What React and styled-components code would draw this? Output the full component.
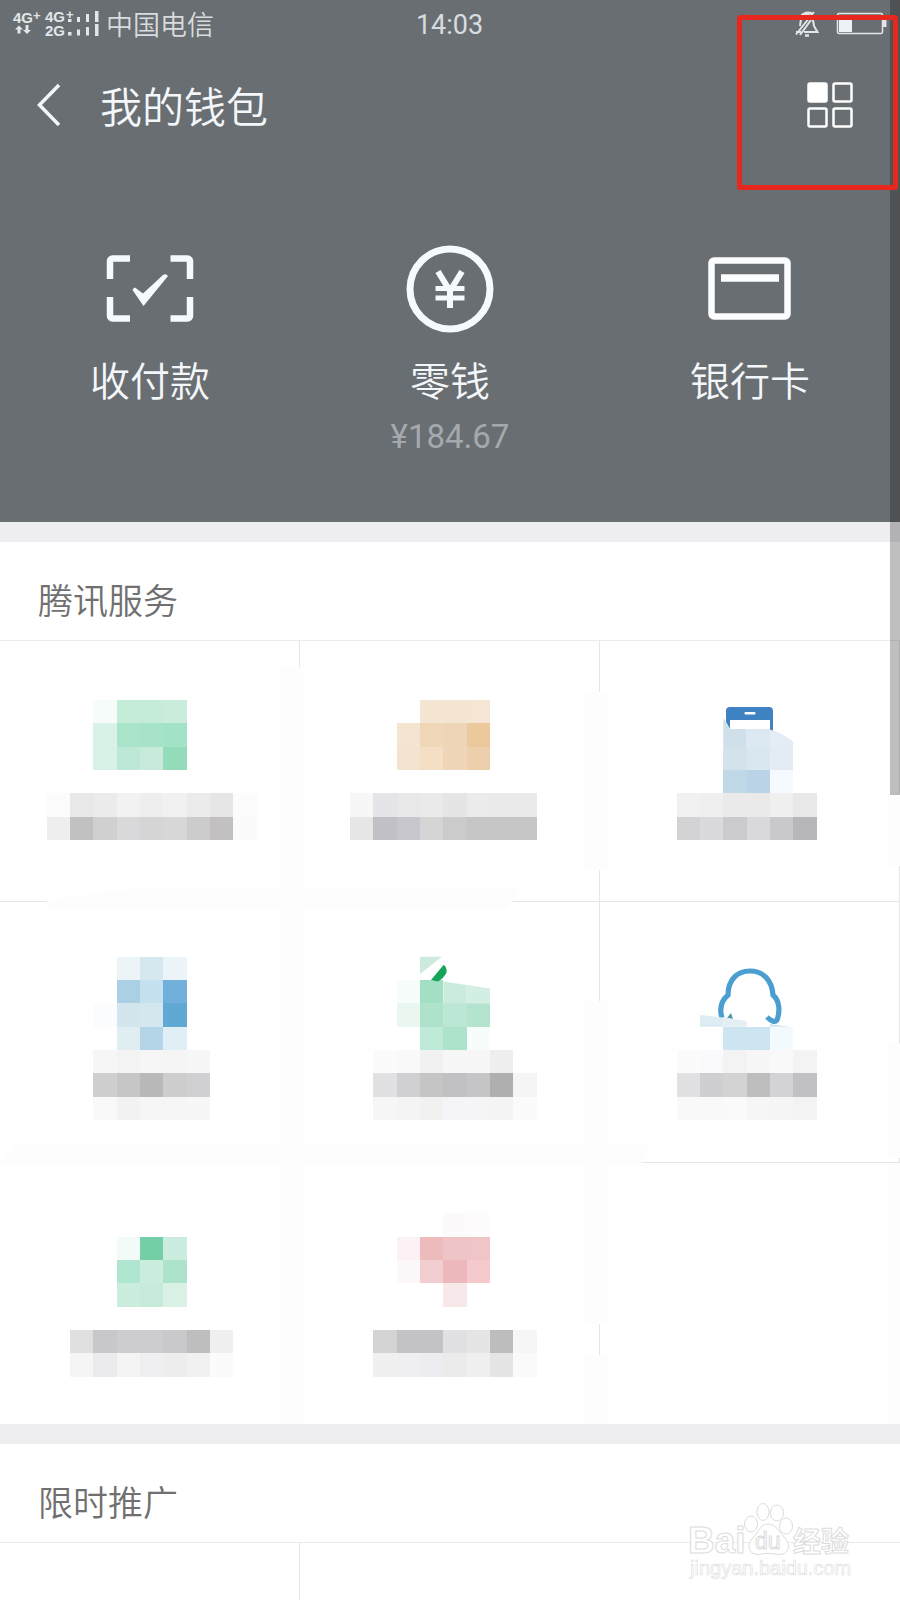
import styled, { createGlobalStyle } from "styled-components"

const CELL = 70 / 3

// each row: [grid row, first grid column, colours]
const services = [
    {
        name: "service-1",
        rows: [
            [30, 4, "#f5fcfa #c5ebd9 #c5ebd9 #caecdd"],
            [31, 4, "#d8f2e7 #a9e4cb #a7e3c9 #a2e2c6"],
            [32, 4, "#d8f2e7 #bde8d5 #c7eadb #93dbb9"],
            [34, 2, "#fcfcfc #e8e8e8 #ebebeb #f2f2f2 #eeeeee #f1f1f1 #ebebeb #e6e6e6 #fcfcfc"],
            [35, 2, "#eeeeee #c1c1c1 #d0d0d0 #d9d9db #d5d5d5 #d7d7d7 #cccccc #c2c0c1 #fbfbfb"],
        ],
    },
    {
        name: "service-2",
        rows: [
            [30, 18, "#f4e5d2 #f4e5d3 #f4e6d3"],
            [31, 17, "#f4e5d1 #efd7b8 #efd5b7 #ebc99c"],
            [32, 17, "#f3e3cf #f4dfc5 #efd6b9 #edcfab"],
            [34, 15, "#f7f7f7 #e5e5e9 #e8e8e9 #eaeaea #e5e5e5 #ebebeb #eaeaea #eaeaea"],
            [35, 15, "#e6e6e6 #c1c0c7 #c7c6cd #d5d5d5 #cbcbcb #c6c6c6 #c6c6c6 #c6c6c6"],
        ],
    },
    {
        name: "service-3",
        rows: [
            [32, 31, "#d2e3ec #d8e7f0 #e3ebf4"],
            [33, 31, "#c1d8e9 #bad3e7 #f6fafe"],
            [34, 29, "#f1f1f1 #efefef #eaeaea #eaeaea #efefef #e8e8e8"],
            [35, 29, "#d3d3d5 #dadadc #cbcbcd #d9d9db #c9c9cb #b7b7b9"],
        ],
        art: (
            <>
                <path d="M726 722V711a4 4 0 0 1 4-4h39a4 4 0 0 1 4 4v20h-3v-11h-40v9z" fill="#3f82c2" />
                <rect x="744.5" y="712" width="11" height="2.6" rx="1" fill="#fff" />
                <path d="M723.3 717.5L730 729H746.7V747H723.3z" fill="#cfe0ea" />
                <path d="M746.7 729H770V747H746.7z" fill="#dce9f2" />
                <path d="M770 729.5Q783 733 793.3 742V747H770z" fill="#e4ecf5" />
            </>
        ),
    },
    {
        name: "service-4",
        rows: [
            [41, 5, "#ecf4f8 #d5e8f0 #ebf4f8"],
            [42, 5, "#abd0e6 #c5e0ee #71b0da"],
            [43, 4, "#fafcfe #d3e6ee #d4e7ee #60a9d5"],
            [44, 5, "#e0eef4 #b4d5e7 #e0eff5"],
            [45, 4, "#f6f6f6 #f3f3f3 #f6f6f6 #f5f5f5 #f7f7f7"],
            [46, 4, "#cfcfcf #c6c6c6 #b9b9b9 #cdcdcd #d0d0d2"],
            [47, 4, "#f9f9f9 #f2f2f2 #f6f6f6 #f6f6f6 #f7f7f7"],
        ],
    },
    {
        name: "service-5",
        rows: [
            [42, 17, "#f7fdfb #a3dfc5"],
            [43, 17, "#eaf7f1 #afe2ca #bbe7d4 #b3e4cd"],
            [44, 18, "#c0ead8 #ade3ca #f6fdfb"],
            [45, 16, "#fbfbfb #f9f9f9 #f1f1f1 #f7f7f7 #f7f7f7 #eeeeee"],
            [46, 16, "#e1e1e3 #d0d0d2 #c5c5c5 #c1c1c3 #c5c5c7 #afafaf #f5f5f5"],
            [47, 16, "#f6f6f6 #f4f4f4 #f1f1f2 #f5f5f9 #f5f5f7 #f4f4f4 #fbfbfb"],
        ],
        art: (
            <>
                <path d="M420 956.7H442L420 974z" fill="#ccebdd" />
                <path d="M443.3 981.5L466.7 985V1003.5H443.3z" fill="#cbecdd" />
                <path d="M466.7 985L490 988.5V1003.5H466.7z" fill="#d3efe3" />
                <path d="M431 980L443.5 965Q447 966.5 446.5 972.5Q444 978 438 981.5z" fill="#16a35b" />
            </>
        ),
    },
    {
        name: "service-6",
        rows: [
            [44, 31, "#cde5f1 #cde5f1 #f3fafd"],
            [45, 29, "#fbfbfb #fafafc #f3f3f3 #f7f7f7 #f9f9f9 #f3f3f3"],
            [46, 29, "#e1e1e3 #cfcfd1 #d3d3d3 #bebebe #d3d3d5 #c1c1c3"],
            [47, 29, "#f9f9f9 #f9f9f9 #fafafa #f6f6f6 #f5f5f5 #f3f3f3"],
        ],
        art: (
            <>
                <path d="M722 1018C719 1008 721 1001 728 995C728 980 737 971 750 971S772 980 773 995C780 1001 780 1012 777 1020Q774 1024 767 1017"
                    fill="none" stroke="#4a9fd0" strokeWidth="5.2" />
                <path d="M727 1018L731 1013L733 1019z" fill="#4f97a0" />
                <path d="M700 1015L723.3 1017.5V1026.7H700z" fill="#ddebf3" />
                <path d="M723.3 1017.5L746.7 1021V1026.7H723.3z" fill="#e3eff5" />
                <path d="M770 1024L790 1026.7H770z" fill="#cde5f1" />
            </>
        ),
    },
    {
        name: "service-7",
        rows: [
            [53, 5, "#f3fbf8 #74cfa7 #cbeddf"],
            [54, 5, "#b0e5cf #cbeddd #ade3cb"],
            [55, 5, "#cbeddd #c7ebda #daf1e5"],
            [57, 3, "#e0e0e1 #c8c8ca #cdcdcf #cdcdcf #c9c9cb #bebebf #f0f0f0"],
            [58, 3, "#f5f5f5 #ebebed #f4f4f5 #efeff1 #ededee #f1f1f1 #fbfbfb"],
        ],
    },
    {
        name: "service-8",
        rows: [
            [52, 19, "#fdfafb #fdfbfc"],
            [53, 17, "#fcf1f4 #eebbbc #efc4c6 #f0c5c8"],
            [54, 17, "#fcf8fa #f2ced1 #edb8bb #f4cacd"],
            [55, 19, "#f7e8ea"],
            [57, 16, "#d4d4d5 #c3c3c5 #c3c3c5 #e1e1e3 #e5e5e6 #bdbdbd #f6f6f6"],
            [58, 16, "#f0f0f0 #efeff1 #ededf1 #ebebec #efefef #e5e5e5 #fafafa"],
        ],
    },
    { name: "empty", rows: [] },
]

// pale bands that run across the tiles
const Bands = () => (
    <g fill="#fdfdfd">
        <path d="M280 667H303V1424H280z" />
        <path d="M583 692H607V870H583zM583 1001H607V1324H583zM583 1355H607V1424H583z" />
        <path d="M47 901Q120 887 180 887H520L508 910H47z" />
        <path d="M20 1143H650L640 1166H0V1162z" />
        <path d="M887 793H900V866H887zM887 1043H900V1158H887zM887 1163H900V1424H887z" />
    </g>
)

const Mosaic = ({ index, rows, art }) => {
    const x = (index % 3) * 300
    const y = 641 + Math.floor(index / 3) * 261
    return (
        <Drawing viewBox={`${x} ${y} 300 261`} aria-hidden="true">
            <Bands />
            {rows.map(([row, col, colors]) => (
                <g key={row} shapeRendering="crispEdges">
                    {colors.split(" ").map((color, i) => (
                        <rect key={i} x={(col + i) * CELL} y={row * CELL} width={CELL} height={CELL} fill={color} />
                    ))}
                </g>
            ))}
            {art}
        </Drawing>
    )
}

const Signal = () => (
    <svg width="88" height="40" viewBox="12 3 88 40" fill="#e3e6e9" fontFamily="Liberation Sans, sans-serif" fontWeight="bold" fontSize="15">
        <text x="13" y="22">4G</text>
        <text x="33" y="19" fontSize="13">+</text>
        <text x="45" y="21">4G</text>
        <text x="66" y="18" fontSize="13">+</text>
        <text x="45" y="35">2G</text>
        <path d="M19 24.5l4 4h-2.5v4h-3v-4H15zM27 33l-4-4h2.5v-5h3v5H31z" />
        <path d="M68 18h3.5v3H68zM77 16h3v5h-3zM86 13h3v8h-3zM95 10h3.5v11H95z" />
        <path d="M68 31h3.5v3.5H68zM77 28.5h3v6h-3zM86 26h3v8.5h-3zM95 23h3.5v12H95z" />
    </svg>
)

const Bell = () => (
    <svg width="26" height="28" viewBox="794 8 26 28" fill="none" stroke="#e3e6e9" strokeWidth="2">
        <path d="M800 24C801 17 801 13 807 12.5C813 13 813 18 814 24L817.5 30H804" />
        <path d="M801 14Q806 8.5 813 12M814 10L796 32.5M811 18L800 33M796 30H801" />
        <path d="M805 33.5H809" strokeWidth="2.5" />
    </svg>
)

const Battery = () => (
    <svg width="51" height="24" viewBox="836 11 51 24">
        <rect x="837.5" y="12.5" width="45" height="20" rx="1.5" fill="none" stroke="#e3e6e9" strokeWidth="1.5" />
        <rect x="839" y="14" width="13" height="17" fill="#eef1f5" />
        <rect x="883" y="19" width="3.5" height="7" fill="#e3e6e9" />
    </svg>
)

const Watermark = () => (
    <Mark width="164" height="88" viewBox="688 1498 164 88" aria-hidden="true">
        <g fill="#fff" stroke="#dcdcdc" strokeWidth="1" fontFamily="Liberation Sans, Noto Sans CJK SC, sans-serif">
            <text x="688" y="1553" fontSize="37" fontWeight="bold">Bai</text>
            <ellipse cx="751" cy="1524" rx="6.5" ry="8" />
            <ellipse cx="763" cy="1512" rx="6" ry="8.5" />
            <ellipse cx="777" cy="1513" rx="6.5" ry="8" />
            <ellipse cx="786" cy="1526" rx="6.5" ry="8" />
            <path d="M768 1524C776 1524 779 1532 785 1538C792 1546 788 1555 778 1554.5C771 1553 765 1553 759 1554.5C749 1555 746 1546 752 1539C758 1533 760 1524 768 1524z" />
            <text x="755" y="1549" fontSize="23">du</text>
            <text x="793" y="1552" fontSize="28" fontWeight="bold">经验</text>
            <text x="690" y="1575" fontSize="20" strokeWidth="0.6">jingyan.baidu.com</text>
        </g>
    </Mark>
)

export default function App() {
    return (
        <Page>
            <GlobalStyle />
            <Header>
                <StatusBar>
                    <Carrier><Signal />中国电信</Carrier>
                    <Time>14:03</Time>
                    <Indicators><Bell /><Battery /></Indicators>
                </StatusBar>
                <Nav>
                    <IconButton aria-label="返回">
                        <svg width="24" height="44" viewBox="0 0 24 44" fill="none" stroke="#f4f7fa" strokeWidth="3.5">
                            <path d="M22 2L2.5 22L22 42" />
                        </svg>
                    </IconButton>
                    <Title>我的钱包</Title>
                    <IconButton aria-label="更多">
                        <svg width="46" height="46" viewBox="0 0 46 46" fill="none" stroke="#fff" strokeWidth="2.5">
                            <rect x="1.5" y="1.5" width="18" height="18" rx="1.5" fill="#fff" />
                            <rect x="26.5" y="1.5" width="18" height="18" rx="1.5" />
                            <rect x="1.5" y="26.5" width="18" height="18" rx="1.5" />
                            <rect x="26.5" y="26.5" width="18" height="18" rx="1.5" />
                        </svg>
                    </IconButton>
                </Nav>
                <Actions>
                    <Action>
                        <svg width="88" height="88" viewBox="106 245 88 88" fill="none" stroke="#f7fafd" strokeWidth="6.5">
                            <path d="M110 279V261a2.5 2.5 0 0 1 2.5-2.5H130M170.5 258.5H187.5a2.5 2.5 0 0 1 2.5 2.5V279M110 297V316a2.5 2.5 0 0 0 2.5 2.5H130M170.5 318.5H187.5a2.5 2.5 0 0 0 2.5-2.5V297" />
                            <path d="M132.5 290Q133 288 135 287.5L143 293.5L163 275Q166 273 168 276L143.5 306z" fill="#f7fafd" stroke="none" />
                        </svg>
                        <Label>收付款</Label>
                    </Action>
                    <Action>
                        <svg width="88" height="88" viewBox="406 245 88 88" fill="none" stroke="#f7fafd" strokeWidth="7">
                            <circle cx="450" cy="289" r="40" />
                            <path d="M438 271.5L450 291L462 271.5M450 289V308" strokeWidth="6" />
                            <path d="M435.5 288.5H464.5M435.5 298H464.5" strokeWidth="5" />
                        </svg>
                        <Label>零钱</Label>
                        <Amount>¥184.67</Amount>
                    </Action>
                    <Action>
                        <svg width="88" height="88" viewBox="706 245 88 88" fill="none" stroke="#fcfdff" strokeWidth="6.5">
                            <rect x="711.5" y="260.5" width="76" height="56" rx="2.5" />
                            <path d="M721 278H779" strokeWidth="7.5" />
                        </svg>
                        <Label>银行卡</Label>
                    </Action>
                </Actions>
            </Header>
            <Gap />
            <SectionTitle>腾讯服务</SectionTitle>
            <Tiles>
                {services.map((service, index) => (
                    <Tile key={service.name} $last={index > 5}>
                        <Mosaic index={index} rows={service.rows} art={service.art} />
                    </Tile>
                ))}
            </Tiles>
            <Gap />
            <Promo>
                <SectionTitle>限时推广</SectionTitle>
                <PromoTiles>
                    <Tile $last />
                </PromoTiles>
                <Watermark />
            </Promo>
            <ScrollThumb />
            <Highlight />
        </Page>
    )
}

const GlobalStyle = createGlobalStyle`
* {
    box-sizing: border-box;
}
body {
    margin: 0;
    background: #fff;
    font-family: "Noto Sans CJK SC", "Noto Sans", sans-serif;
    font-weight: 350;
}
svg {
    display: block;
    flex-shrink: 0;
}
button {
    padding: 0;
    border: 0;
    background: none;
    color: inherit;
    font: inherit;
}
`

const Page = styled.div`
position: relative;
display: flex;
flex-direction: column;
min-height: 100vh;
`

const Header = styled.header`
padding-bottom: 66px;
background: #696e72;
color: #f4f7fa;
`

const StatusBar = styled.div`
display: grid;
grid-template-columns: 1fr auto 1fr;
align-items: center;
height: 48px;
padding: 0 13px 0 12px;
color: #d9dcdf;
`

const Carrier = styled.div`
display: flex;
align-items: center;
gap: 6px;
font-size: 27px;
line-height: 32px;
`

const Time = styled.div`
padding-top: 2px;
font-family: Roboto, sans-serif;
font-size: 27px;
line-height: 32px;
font-weight: 400;
`

const Indicators = styled.div`
display: flex;
justify-content: flex-end;
align-items: center;
gap: 16px;
`

const Nav = styled.nav`
display: flex;
align-items: center;
height: 114px;
padding: 0 47px 0 37px;
`

const IconButton = styled.button`
cursor: pointer;
`

const Title = styled.h1`
flex: 1;
margin: 0 0 0 39px;
font-size: 42px;
line-height: 48px;
font-weight: 350;
`

const Actions = styled.div`
display: grid;
grid-template-columns: repeat(3, 1fr);
padding-top: 83px;
`

const Action = styled.button`
display: flex;
flex-direction: column;
align-items: center;
height: 211px;
cursor: pointer;
`

const Label = styled.span`
margin-top: 22px;
font-size: 40px;
line-height: 48px;
`

const Amount = styled.span`
margin-top: 14px;
font-family: Roboto, sans-serif;
font-size: 33px;
line-height: 40px;
font-weight: 400;
color: #a5a9ad;
`

const Gap = styled.div`
height: 20px;
background: #eeeef1;
`

const SectionTitle = styled.h2`
display: flex;
align-items: center;
height: 99px;
margin: 0;
padding: 16px 38px 0;
border-bottom: 1px solid #ebebeb;
font-size: 35px;
line-height: 48px;
font-weight: 350;
color: #707070;
`

const Tiles = styled.div`
display: grid;
grid-template-columns: repeat(3, 1fr);
`

const Tile = styled.div`
box-shadow: inset -1px ${props => props.$last ? "0" : "-1px"} #e6e6e6;
`

const Drawing = styled.svg`
width: 100%;
height: auto;
`

const Promo = styled.section`
position: relative;
flex: 1;
display: flex;
flex-direction: column;
`

const PromoTiles = styled(Tiles)`
flex: 1;
`

const Mark = styled.svg`
position: absolute;
right: 48px;
bottom: 14px;
`

const ScrollThumb = styled.div`
position: absolute;
top: 0;
right: 0;
width: 10px;
height: 795px;
background: rgba(0, 0, 0, 0.25);
`

const Highlight = styled.div`
position: absolute;
top: 15px;
right: 2px;
width: 161px;
height: 175px;
border: 5px solid #e6281f;
border-radius: 3px;
`
